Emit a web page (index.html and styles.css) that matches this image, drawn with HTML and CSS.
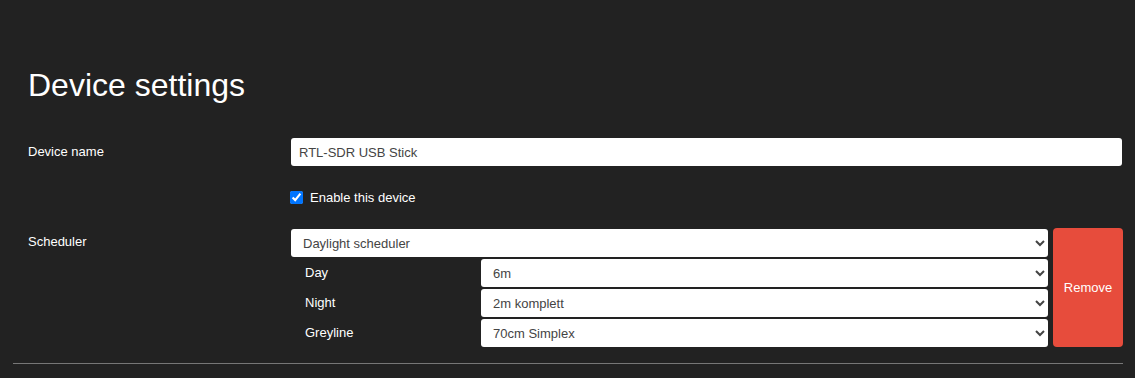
FILE: index.html
```html
<!DOCTYPE html>
<html lang="en">
<head>
    <meta charset="UTF-8">
    <title>Device settings</title>
    <link rel="stylesheet" href="styles.css">
</head>
<body>

    <div class="page">
        <h1>Device settings</h1>

        <div class="row row-name">
            <label class="label" for="device-name">Device name</label>
            <input class="field" id="device-name" type="text" value="RTL-SDR USB Stick">
        </div>

        <div class="row row-check">
            <span></span>
            <label class="check">
                <input type="checkbox" checked>
                Enable this device
            </label>
        </div>

        <div class="row row-scheduler">
            <span class="label">Scheduler</span>
            <div class="scheduler">
                <div class="scheduler-main">
                    <select class="field select">
                        <option>Daylight scheduler</option>
                    </select>
                    <div class="slot">
                        <span class="slot-label">Day</span>
                        <select class="field select"><option>6m</option></select>
                    </div>
                    <div class="slot">
                        <span class="slot-label">Night</span>
                        <select class="field select"><option>2m komplett</option></select>
                    </div>
                    <div class="slot">
                        <span class="slot-label">Greyline</span>
                        <select class="field select"><option>70cm Simplex</option></select>
                    </div>
                </div>
                <button class="button-remove">Remove</button>
            </div>
        </div>

        <hr class="divider">
    </div>

</body>
</html>
```

FILE: styles.css
```css
* {
    margin: 0;
    padding: 0;
    box-sizing: border-box;
}

body {
    font-family: "Liberation Sans", Arial, sans-serif;
    background-color: #222222;
    color: #ffffff;
    font-size: 13px;
}

.page {
    padding: 0 13px 0 13px;
}

h1 {
    font-size: 32px;
    font-weight: 400;
    line-height: 37px;
    padding: 67px 0 0 15px;
    margin-bottom: 34px;
}

/* form rows */
.row {
    display: grid;
    grid-template-columns: 263px 1fr;
    padding-left: 15px;
}

.row-name {
    margin-bottom: 22px;
}

.row-check {
    margin-bottom: 21px;
}

.row-scheduler {
    margin-bottom: 16px;
}

.label {
    line-height: 28px;
}

.field {
    height: 28px;
    width: 100%;
    border: none;
    border-radius: 3px;
    background-color: #ffffff;
    color: #444444;
    font-family: "Liberation Sans", Arial, sans-serif;
    font-size: 13px;
    padding: 0 8px;
}

.check {
    display: flex;
    align-items: center;
    gap: 7px;
    height: 19px;
    margin-left: -1px;
}

.check input {
    width: 13px;
    height: 13px;
    margin: 0;
}

/* scheduler */
.scheduler {
    display: flex;
    gap: 5px;
    margin-right: -1px;
}

.scheduler-main {
    flex: 1;
    display: flex;
    flex-direction: column;
    gap: 2px;
    padding-top: 1px;
}

.select {
    padding: 0 4px 0 8px;
}

.slot {
    display: grid;
    grid-template-columns: 190px 1fr;
}

.slot-label {
    padding-left: 14px;
    line-height: 28px;
}

.button-remove {
    width: 70px;
    background-color: #e74c3c;
    color: #ffffff;
    border: none;
    border-radius: 4px;
    font-family: "Liberation Sans", Arial, sans-serif;
    font-size: 13px;
    cursor: pointer;
}

.divider {
    border: none;
    border-top: 1px solid #777777;
    margin-right: -1px;
}
```
